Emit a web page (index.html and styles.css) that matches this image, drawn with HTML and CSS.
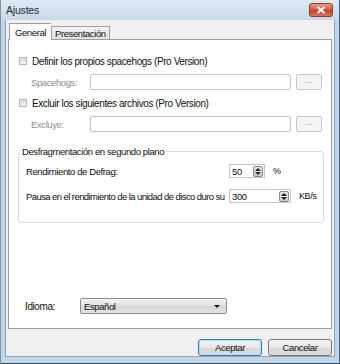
FILE: index.html
```html
<!DOCTYPE html>
<html lang="es">
  <head>
    <meta charset="UTF-8" />
    <title>Ajustes</title>
    <link rel="stylesheet" href="styles.css">
  </head>
  <body>
    <div class="window">
      <!-- Title bar -->
      <div class="title-bar">
        <span class="title">Ajustes</span>
        <div class="close-button">
          <svg width="10" height="8" viewBox="0 0 10 8">
            <path d="M1.5 1 L8.5 7 M8.5 1 L1.5 7" stroke="#fff" stroke-width="2" />
          </svg>
        </div>
      </div>

      <div class="dialog">
        <!-- Tabs -->
        <div class="tabs">
          <div class="tab active">General</div>
          <div class="tab">Presentación</div>
        </div>

        <div class="tab-panel">
          <div class="check-row first">
            <span class="checkbox"></span>
            <span>Definir los propios spacehogs (Pro Version)</span>
          </div>
          <div class="field-row">
            <span class="field-label">Spacehogs:</span>
            <span class="text-input"></span>
            <span class="browse-button">...</span>
          </div>

          <div class="check-row">
            <span class="checkbox"></span>
            <span>Excluir los siguientes archivos (Pro Version)</span>
          </div>
          <div class="field-row">
            <span class="field-label">Excluye:</span>
            <span class="text-input"></span>
            <span class="browse-button">...</span>
          </div>

          <!-- Background defrag group -->
          <div class="group">
            <span class="legend">Desfragmentación en segundo plano</span>
            <div class="spin-row">
              <span class="spin-label">Rendimiento de Defrag:</span>
              <span class="spin-input small">
                50
                <span class="spinner"></span>
              </span>
              <span class="unit">%</span>
            </div>
            <div class="spin-row">
              <span class="spin-label long">Pausa en el rendimiento de la unidad de disco duro su</span>
              <span class="spin-input">
                300
                <span class="spinner"></span>
              </span>
              <span class="unit">KB/s</span>
            </div>
          </div>

          <div class="language-row">
            <span class="language-label">Idioma:</span>
            <div class="select">
              Español
              <span class="select-arrow"></span>
            </div>
          </div>
        </div>

        <div class="button-bar">
          <div class="button default">Aceptar</div>
          <div class="button">Cancelar</div>
        </div>
      </div>
    </div>
  </body>
</html>
```

FILE: styles.css
```css
body {
  margin: 0;
  padding: 0;
  font-family: "Liberation Sans", Arial, sans-serif;
  font-size: 9.5px;
  letter-spacing: -0.4px;
  color: #111;
}

.window {
  width: 340px;
  height: 364px;
  box-sizing: border-box;
  background-color: #c2d6e8;
  border-left: 1px solid #7f93a6;
  border-right: 1px solid #42627c;
  border-bottom: 1px solid #2f4c63;
  display: flex;
  flex-direction: column;
}

.title-bar {
  height: 20px;
  display: flex;
  align-items: center;
  justify-content: space-between;
  padding: 0 6px 0 5px;
  background: linear-gradient(#dfe9f4, #c9d9ea);
}

.title {
  font-size: 10.5px;
  letter-spacing: -0.2px;
  color: #1e2a36;
}

.close-button {
  width: 22px;
  height: 12px;
  margin-top: -1px;
  border: 1px solid #8e3a26;
  border-radius: 3px;
  background: linear-gradient(#e9a290, #d2583c 50%, #c13f22 51%, #d9745a);
  display: flex;
  align-items: center;
  justify-content: center;
}

.dialog {
  flex: 1;
  margin: 0 4px 6px 4px;
  background-color: #f0f0f0;
  border: 1px solid #8fa3b6;
  border-top: none;
  display: flex;
  flex-direction: column;
  padding: 4px 2px 0 2px;
}

.tabs {
  display: flex;
  align-items: flex-end;
  height: 16px;
  margin-bottom: -1px;
  padding-left: 1px;
}

.tab {
  height: 13px;
  padding: 0 3px;
  border: 1px solid #a0a0a0;
  border-bottom: none;
  background: linear-gradient(#f4f4f4, #dedede);
  line-height: 13px;
}

.tab.active {
  height: 16px;
  line-height: 17px;
  padding: 0 5px;
  background: #fff;
  border-right: none;
  position: relative;
  z-index: 1;
}

.tab-panel {
  height: 288px;
  background: #fff;
  border: 1px solid #a0a0a0;
  display: flex;
  flex-direction: column;
  padding: 0 9px;
}

.check-row {
  display: flex;
  align-items: center;
  gap: 5px;
  height: 14px;
  margin-top: 6px;
  font-size: 10px;
}

.check-row.first {
  margin-top: 14px;
}

.checkbox {
  width: 6px;
  height: 6px;
  margin-left: 1px;
  border: 1px solid #b8b8b8;
  background: linear-gradient(#d8d8d8, #f2f2f2);
}

.field-row {
  display: flex;
  align-items: center;
  height: 16px;
  margin-top: 6px;
}

.field-label {
  width: 72px;
  padding-left: 13px;
  box-sizing: border-box;
  color: #8d8d8d;
}

.text-input {
  width: 200px;
  height: 14px;
  border: 1px solid #c4c4c4;
  border-radius: 2px;
  background: #fff;
}

.browse-button {
  width: 24px;
  height: 14px;
  margin-left: 5px;
  border: 1px solid #cbcbcb;
  border-radius: 2px;
  background: #f4f4f4;
  color: #9a9a9a;
  font-size: 9px;
  letter-spacing: 0;
  line-height: 11px;
  text-align: center;
}

.group {
  margin-top: 19px;
  width: 306px;
  height: 72px;
  box-sizing: border-box;
  border: 1px solid #dcdcdc;
  border-radius: 3px;
  padding: 11px 0 0 7px;
  display: flex;
  flex-direction: column;
  gap: 9px;
  position: relative;
}

.legend {
  position: absolute;
  top: -6px;
  left: 1px;
  padding: 0 2px;
  background: #fff;
}

.spin-row {
  display: flex;
  align-items: center;
  height: 16px;
}

.spin-label {
  width: 203px;
  white-space: nowrap;
}

.spin-label.long {
  letter-spacing: -0.58px;
}

.spin-input {
  width: 62px;
  height: 14px;
  box-sizing: border-box;
  border: 1px solid #c4c4c4;
  display: flex;
  align-items: center;
  justify-content: space-between;
  padding: 0 1px 0 2px;
  background: #fff;
}

.spin-input.small {
  width: 36px;
}

.spinner {
  width: 10px;
  height: 11px;
  box-sizing: border-box;
  border: 1px solid #8a8a8a;
  border-radius: 2px;
  background:
    linear-gradient(#fff, #fff) center / 6px 1px no-repeat,
    linear-gradient(#e6e6e6, #c8c8c8);
  position: relative;
}

.spinner::before,
.spinner::after {
  content: "";
  position: absolute;
  left: 1px;
  border-left: 3px solid transparent;
  border-right: 3px solid transparent;
}

.spinner::before {
  top: 1px;
  border-bottom: 3px solid #222;
}

.spinner::after {
  bottom: 1px;
  border-top: 3px solid #222;
}

.unit {
  margin-left: 8px;
  font-size: 9px;
}

.language-row {
  display: flex;
  align-items: center;
  margin-top: 75px;
  height: 16px;
}

.language-label {
  width: 62px;
  padding-left: 7px;
  box-sizing: border-box;
  font-size: 10px;
}

.select {
  width: 147px;
  height: 16px;
  box-sizing: border-box;
  border: 1px solid #8e8e8e;
  border-radius: 2px;
  background: linear-gradient(#f6f6f6, #e0e0e0 50%, #d6d6d6 51%, #e3e3e3);
  display: flex;
  align-items: center;
  justify-content: space-between;
  padding: 0 6px 0 3px;
}

.select-arrow {
  border-left: 3px solid transparent;
  border-right: 3px solid transparent;
  border-top: 3px solid #111;
}

.button-bar {
  display: flex;
  justify-content: flex-end;
  gap: 6px;
  padding-top: 10px;
}

.button {
  width: 64px;
  height: 17px;
  box-sizing: border-box;
  border: 1px solid #7a7a7a;
  border-radius: 3px;
  background: linear-gradient(#f4f4f4, #e8e8e8 50%, #d8d8d8 51%, #dcdcdc);
  text-align: center;
  line-height: 15px;
}

.button.default {
  border-color: #3c7fb1;
  box-shadow: inset 0 0 0 1px #a6dcf5;
}
```
